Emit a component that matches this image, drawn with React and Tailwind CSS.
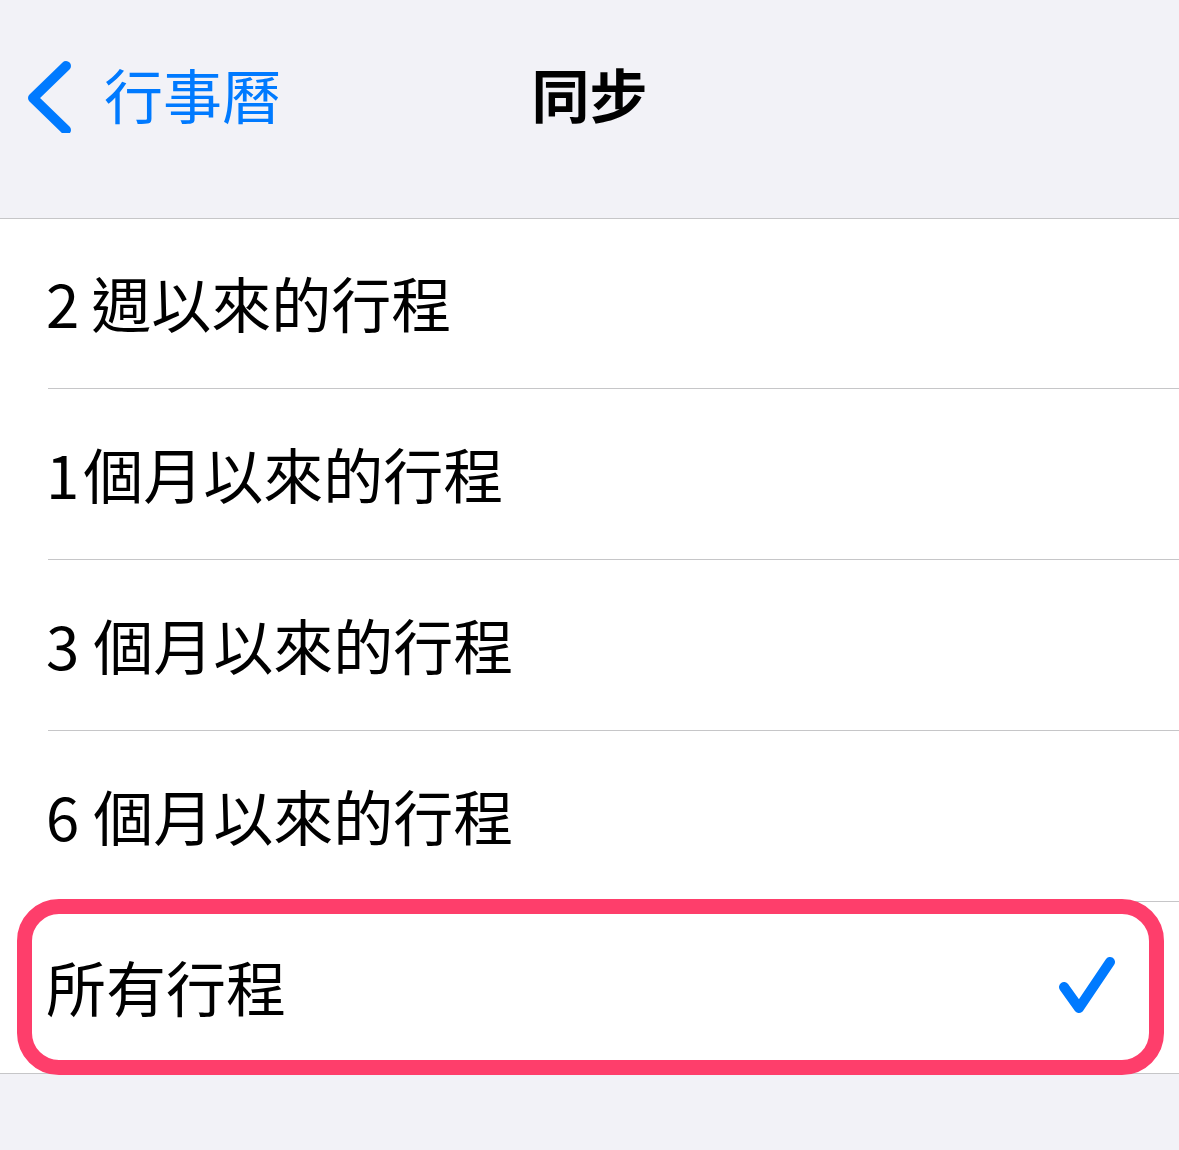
import React from 'react';

const options = [
  { num: '2', text: '週以來的行程', h: 'h-[170px]', gap: 'mr-[12px]' },
  { num: '1', text: '個月以來的行程', h: 'h-[171px]', gap: 'mr-[4px]' },
  { num: '3', text: '個月以來的行程', h: 'h-[171px]', gap: 'mr-[14px]' },
  { num: '6', text: '個月以來的行程', h: 'h-[171px]', gap: 'mr-[14px]' },
  { num: '', text: '所有行程', h: 'h-[171px]', selected: true },
];

function Chevron() {
  return (
    <svg width="50" height="80" viewBox="0 0 50 80" className="shrink-0">
      <polyline
        points="40,13 7,45 40,77"
        fill="none"
        stroke="#007aff"
        strokeWidth="10"
        strokeLinecap="round"
        strokeLinejoin="round"
      />
    </svg>
  );
}

function Check() {
  return (
    <svg width="64" height="64" viewBox="0 0 64 64">
      <polyline
        points="8,31 23,52 54,6"
        fill="none"
        stroke="#007aff"
        strokeWidth="10"
        strokeLinecap="round"
        strokeLinejoin="round"
      />
    </svg>
  );
}

export default function App() {
  return (
    <div
      className="min-h-[1150px] w-full bg-[#f2f2f7] text-black"
      style={{ fontFamily: '"Noto Sans CJK TC", "Noto Sans", sans-serif' }}
    >
      {/* Nav bar */}
      <div className="relative h-[219px] border-b border-[#c6c6c8]">
        <div className="flex h-[186px] items-center">
          <div className="flex items-center pl-[26px]">
            <Chevron />
            <span className="ml-[28px] text-[59px] leading-none text-[#007aff]">行事曆</span>
          </div>
        </div>
        <div className="absolute inset-x-0 top-0 flex h-[186px] items-center justify-center">
          <span className="text-[58px] font-bold leading-none">同步</span>
        </div>
      </div>

      {/* Options */}
      <div className="border-b border-[#c6c6c8] bg-white">
        {options.map((o, i) => (
          <div key={o.num + o.text} className={`relative ${o.h} pl-[48px]`}>
            <div
              className={`flex h-full items-center justify-between pr-[59px] ${
                i < options.length - 1 ? 'border-b border-[#c6c6c8]' : ''
              }`}
            >
              <span className="-ml-[2px] -mt-[3px] flex items-center text-[60px] leading-none">
                {o.num && <span className={o.gap}>{o.num}</span>}
                <span>{o.text}</span>
              </span>
              {o.selected && <Check />}
            </div>
            {o.selected && (
              <div className="pointer-events-none absolute -top-[3px] -bottom-[2px] left-[17px] right-[15px] rounded-[42px] border-[15px] border-[#fe3e6b]" />
            )}
          </div>
        ))}
      </div>
    </div>
  );
}
